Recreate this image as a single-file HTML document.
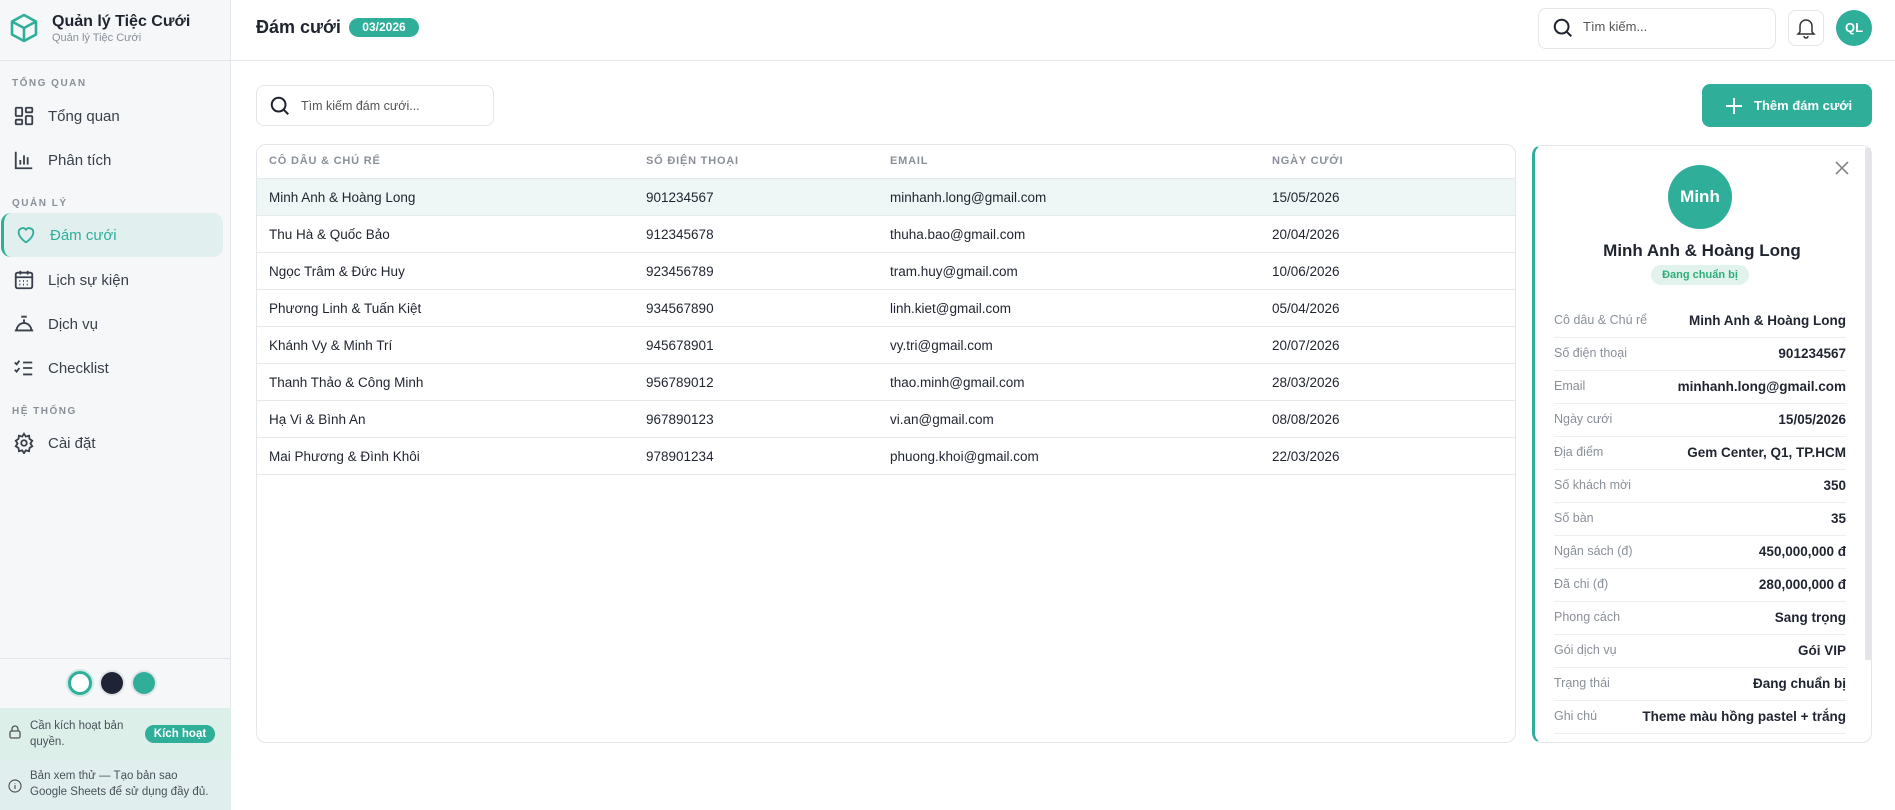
<!DOCTYPE html>
<html><head><meta charset="utf-8"><style>
*{box-sizing:border-box;margin:0;padding:0}
body{width:1895px;height:810px;overflow:hidden;font-family:"Liberation Sans","Noto Sans CJK SC",sans-serif;background:#fff;color:#1f2430;position:relative}
.abs{position:absolute}
.sb{left:0;top:0;width:231px;height:810px;background:#f5f7f9;border-right:1px solid #e3e6ea}
.sec{position:absolute;left:12px;font-size:10px;font-weight:bold;letter-spacing:1.5px;color:#8a9099}
.nav{position:absolute;left:13px;width:210px;height:40px;display:flex;align-items:center;font-size:15px;color:#3a404a}
.nav svg{width:22px;height:22px;margin-right:13px;flex:none}
.th{position:absolute;top:155px;font-size:11px;font-weight:bold;color:#8a9099;letter-spacing:.8px}
.row{position:absolute;left:257px;width:1258px;height:37px;border-top:1px solid #e6e8ec;font-size:13.5px;color:#1f2430}
.row span{position:absolute;top:11px}
.dl{position:absolute;left:1554px;width:292px;height:33px;border-bottom:1px solid #eceef1;font-size:12.5px}
.dl .l{position:absolute;left:0;top:8px;color:#8a9099}
.dl .v{position:absolute;right:0;top:8px;font-weight:bold;font-size:13.5px;color:#1f2430}
</style></head><body>
<div class="abs sb"></div>
<div class="abs" style="left:0;top:60px;width:231px;border-top:1px solid #e3e6ea"></div>
<svg class="abs" style="left:10px;top:13px" width="28" height="30" viewBox="0 0 28 30" fill="none" stroke="#2fae9a" stroke-width="2.6" stroke-linejoin="round"><path d="M14 2 L26 8.5 V21.5 L14 28 L2 21.5 V8.5 Z"/><path d="M2 8.5 L14 15 L26 8.5 M14 15 V28"/></svg>
<div class="abs" style="left:52px;top:13px;font-size:16px;font-weight:bold;color:#1f2430">Quản lý Tiệc Cưới</div>
<div class="abs" style="left:52px;top:32px;font-size:11px;color:#8a9099">Quản lý Tiệc Cưới</div>
<div class="sec" style="top:78px">TỔNG QUAN</div>
<div class="nav" style="top:96px"><svg viewBox="0 0 24 24" fill="none" stroke="#3a404a" stroke-width="2"><rect x="3" y="3" width="7" height="9" rx="1"/><rect x="14" y="3" width="7" height="5" rx="1"/><rect x="14" y="12" width="7" height="9" rx="1"/><rect x="3" y="16" width="7" height="5" rx="1"/></svg>Tổng quan</div>
<div class="nav" style="top:140px"><svg viewBox="0 0 24 24" fill="none" stroke="#3a404a" stroke-width="2"><path d="M3 3v18h18M8 17v-5M12 17V7M16 17v-8"/></svg>Phân tích</div>
<div class="sec" style="top:198px">QUẢN LÝ</div>
<div class="abs" style="left:1px;top:213px;width:222px;height:44px;background:#e1efee;border-radius:10px;border-left:3px solid #2fae9a"></div>
<div class="nav" style="top:215px;left:15px;color:#2fae9a"><svg viewBox="0 0 24 24" fill="none" stroke="#2fae9a" stroke-width="2"><path d="M12 20s-8-5-8-11a4.5 4.5 0 0 1 8-2.8A4.5 4.5 0 0 1 20 9c0 6-8 11-8 11z"/></svg>Đám cưới</div>
<div class="nav" style="top:260px"><svg viewBox="0 0 24 24" fill="none" stroke="#3a404a" stroke-width="2"><rect x="3" y="4" width="18" height="17" rx="2"/><path d="M3 9h18M8 2v4M16 2v4M7 13h1M11 13h1M15 13h1M7 17h1M11 17h1M15 17h1"/></svg>Lịch sự kiện</div>
<div class="nav" style="top:304px"><svg viewBox="0 0 24 24" fill="none" stroke="#3a404a" stroke-width="2"><path d="M2 19h20M4 19a8 8 0 0 1 16 0M12 11V7M9 4h6"/></svg>Dịch vụ</div>
<div class="nav" style="top:348px"><svg viewBox="0 0 24 24" fill="none" stroke="#3a404a" stroke-width="2"><path d="M2 6l2 2 3-4M2 14l2 2 3-4M11 6h10M11 12h10M11 19h10"/></svg>Checklist</div>
<div class="sec" style="top:406px">HỆ THỐNG</div>
<div class="nav" style="top:423px"><svg viewBox="0 0 24 24" fill="none" stroke="#3a404a" stroke-width="2"><circle cx="12" cy="12" r="3"/><path d="M12 2l2 3 3.5-1 .5 3.5 3 2-2 3 2 3-3 2-.5 3.5-3.5-1-2 3-2-3-3.5 1-.5-3.5-3-2 2-3-2-3 3-2 .5-3.5 3.5 1z"/></svg>Cài đặt</div>
<div class="abs" style="left:0;top:658px;width:231px;border-top:1px solid #e3e6ea"></div>
<div class="abs" style="left:68px;top:671px;width:24px;height:24px;border-radius:50%;background:#fff;border:3px solid #2fae9a;box-shadow:0 0 0 2px #cfe9e4"></div>
<div class="abs" style="left:101px;top:672px;width:22px;height:22px;border-radius:50%;background:#1e2435;box-shadow:0 0 0 2px #e2e4e8"></div>
<div class="abs" style="left:133px;top:672px;width:22px;height:22px;border-radius:50%;background:#2fae9a;box-shadow:0 0 0 2px #e2e4e8"></div>
<div class="abs" style="left:0;top:708px;width:231px;height:51px;background:#dcefe9"></div>
<svg class="abs" style="left:9px;top:725px" width="12" height="14" viewBox="0 0 12 14" fill="none" stroke="#555" stroke-width="1.3"><rect x="1" y="6" width="10" height="7" rx="1.5"/><path d="M3 6V4a3 3 0 0 1 6 0v2"/></svg>
<div class="abs" style="left:30px;top:718px;font-size:11.5px;line-height:16px;color:#4a505a">Cần kích hoạt bản<br>quyền.</div>
<div class="abs" style="left:145px;top:725px;width:70px;height:18px;border-radius:9px;background:#2fae9a;color:#fff;font-size:11.5px;font-weight:bold;text-align:center;line-height:18px">Kích hoạt</div>
<div class="abs" style="left:0;top:759px;width:231px;height:51px;background:#e0efed"></div>
<svg class="abs" style="left:8px;top:779px" width="14" height="14" viewBox="0 0 14 14" fill="none" stroke="#555" stroke-width="1.2"><circle cx="7" cy="7" r="6"/><path d="M7 6v4M7 4v.5"/></svg>
<div class="abs" style="left:30px;top:768px;font-size:11.5px;line-height:16px;color:#4a505a">Bản xem thử — Tạo bản sao<br>Google Sheets để sử dụng đầy đủ.</div>

<div class="abs" style="left:231px;top:60px;width:1664px;border-top:1px solid #e6e8ec"></div>
<div class="abs" style="left:256px;top:17px;font-size:18px;font-weight:bold">Đám cưới</div>
<div class="abs" style="left:349px;top:18px;width:70px;height:19px;border-radius:10px;background:#2fae9a;color:#fff;font-size:12px;font-weight:bold;text-align:center;line-height:19px">03/2026</div>
<div class="abs" style="left:1538px;top:8px;width:238px;height:41px;border:1px solid #e3e6ea;border-radius:8px"></div>
<svg class="abs" style="left:1552px;top:17px" width="22" height="22" viewBox="0 0 24 24" fill="none" stroke="#1f2430" stroke-width="2.2"><circle cx="10.5" cy="10.5" r="7.5"/><path d="M16 16l5 5"/></svg>
<div class="abs" style="left:1583px;top:19px;font-size:13px;color:#555">Tìm kiếm...</div>
<div class="abs" style="left:1788px;top:10px;width:36px;height:36px;border:1px solid #e3e6ea;border-radius:8px"></div>
<svg class="abs" style="left:1796px;top:17px" width="20" height="22" viewBox="0 0 20 22" fill="none" stroke="#333" stroke-width="1.5"><path d="M4 15V9a6 6 0 0 1 12 0v6l2 2H2z M8 19a2 2 0 0 0 4 0"/></svg>
<div class="abs" style="left:1836px;top:10px;width:36px;height:36px;border-radius:50%;background:#2fae9a;color:#fff;font-weight:bold;font-size:13px;text-align:center;line-height:36px">QL</div>

<div class="abs" style="left:256px;top:85px;width:238px;height:41px;border:1px solid #e3e6ea;border-radius:8px"></div>
<svg class="abs" style="left:269px;top:95px" width="22" height="22" viewBox="0 0 24 24" fill="none" stroke="#1f2430" stroke-width="2.2"><circle cx="10.5" cy="10.5" r="7.5"/><path d="M16 16l5 5"/></svg>
<div class="abs" style="left:301px;top:99px;font-size:12.5px;color:#555">Tìm kiếm đám cưới...</div>
<div class="abs" style="left:1702px;top:84px;width:170px;height:43px;border-radius:8px;background:#2fae9a"></div>
<svg class="abs" style="left:1725px;top:97px" width="18" height="18" viewBox="0 0 18 18" stroke="#fff" stroke-width="2"><path d="M9 1v16M1 9h16"/></svg>
<div class="abs" style="left:1754px;top:98px;font-size:13px;font-weight:bold;color:#fff">Thêm đám cưới</div>

<div class="abs" style="left:256px;top:144px;width:1260px;height:599px;border:1px solid #e3e6ea;border-radius:10px"></div>
<div class="th" style="left:269px">CÔ DÂU &amp; CHÚ RỂ</div>
<div class="th" style="left:646px">SỐ ĐIỆN THOẠI</div>
<div class="th" style="left:890px">EMAIL</div>
<div class="th" style="left:1272px">NGÀY CƯỚI</div>
<div class="row" style="top:178px;background:#eef7f5"><span style="left:12px">Minh Anh &amp; Hoàng Long</span><span style="left:389px">901234567</span><span style="left:633px">minhanh.long@gmail.com</span><span style="left:1015px">15/05/2026</span></div>
<div class="row" style="top:215px"><span style="left:12px">Thu Hà &amp; Quốc Bảo</span><span style="left:389px">912345678</span><span style="left:633px">thuha.bao@gmail.com</span><span style="left:1015px">20/04/2026</span></div>
<div class="row" style="top:252px"><span style="left:12px">Ngọc Trâm &amp; Đức Huy</span><span style="left:389px">923456789</span><span style="left:633px">tram.huy@gmail.com</span><span style="left:1015px">10/06/2026</span></div>
<div class="row" style="top:289px"><span style="left:12px">Phương Linh &amp; Tuấn Kiệt</span><span style="left:389px">934567890</span><span style="left:633px">linh.kiet@gmail.com</span><span style="left:1015px">05/04/2026</span></div>
<div class="row" style="top:326px"><span style="left:12px">Khánh Vy &amp; Minh Trí</span><span style="left:389px">945678901</span><span style="left:633px">vy.tri@gmail.com</span><span style="left:1015px">20/07/2026</span></div>
<div class="row" style="top:363px"><span style="left:12px">Thanh Thảo &amp; Công Minh</span><span style="left:389px">956789012</span><span style="left:633px">thao.minh@gmail.com</span><span style="left:1015px">28/03/2026</span></div>
<div class="row" style="top:400px"><span style="left:12px">Hạ Vi &amp; Bình An</span><span style="left:389px">967890123</span><span style="left:633px">vi.an@gmail.com</span><span style="left:1015px">08/08/2026</span></div>
<div class="row" style="top:437px;border-bottom:1px solid #e6e8ec;height:38px"><span style="left:12px">Mai Phương &amp; Đình Khôi</span><span style="left:389px">978901234</span><span style="left:633px">phuong.khoi@gmail.com</span><span style="left:1015px">22/03/2026</span></div>

<div class="abs" style="left:1532px;top:145px;width:340px;height:598px;border:1px solid #e3e6ea;border-left:3px solid #2fae9a;border-radius:10px"></div>
<div class="abs" style="left:1865px;top:148px;width:6px;height:512px;background:#e3e4e8"></div>
<svg class="abs" style="left:1835px;top:161px" width="14" height="14" viewBox="0 0 14 14" stroke="#888" stroke-width="1.6"><path d="M1 1l12 12M13 1L1 13"/></svg>
<div class="abs" style="left:1668px;top:165px;width:64px;height:64px;border-radius:50%;background:#2fae9a;color:#fff;font-weight:bold;font-size:17px;text-align:center;line-height:64px">Minh</div>
<div class="abs" style="left:1532px;top:241px;width:340px;text-align:center;font-size:17px;font-weight:bold">Minh Anh &amp; Hoàng Long</div>
<div class="abs" style="left:1651px;top:265px;width:98px;height:20px;border-radius:10px;background:#e1f3ec;color:#2fae7a;font-size:11px;font-weight:bold;text-align:center;line-height:20px">Đang chuẩn bị</div>
<div class="dl" style="top:305px"><span class="l">Cô dâu &amp; Chú rể</span><span class="v">Minh Anh &amp; Hoàng Long</span></div>
<div class="dl" style="top:338px"><span class="l">Số điện thoại</span><span class="v">901234567</span></div>
<div class="dl" style="top:371px"><span class="l">Email</span><span class="v">minhanh.long@gmail.com</span></div>
<div class="dl" style="top:404px"><span class="l">Ngày cưới</span><span class="v">15/05/2026</span></div>
<div class="dl" style="top:437px"><span class="l">Địa điểm</span><span class="v">Gem Center, Q1, TP.HCM</span></div>
<div class="dl" style="top:470px"><span class="l">Số khách mời</span><span class="v">350</span></div>
<div class="dl" style="top:503px"><span class="l">Số bàn</span><span class="v">35</span></div>
<div class="dl" style="top:536px"><span class="l">Ngân sách (đ)</span><span class="v">450,000,000 đ</span></div>
<div class="dl" style="top:569px"><span class="l">Đã chi (đ)</span><span class="v">280,000,000 đ</span></div>
<div class="dl" style="top:602px"><span class="l">Phong cách</span><span class="v">Sang trọng</span></div>
<div class="dl" style="top:635px"><span class="l">Gói dịch vụ</span><span class="v">Gói VIP</span></div>
<div class="dl" style="top:668px"><span class="l">Trạng thái</span><span class="v">Đang chuẩn bị</span></div>
<div class="dl" style="top:701px"><span class="l">Ghi chú</span><span class="v">Theme màu hồng pastel + trắng</span></div>
</body></html>
